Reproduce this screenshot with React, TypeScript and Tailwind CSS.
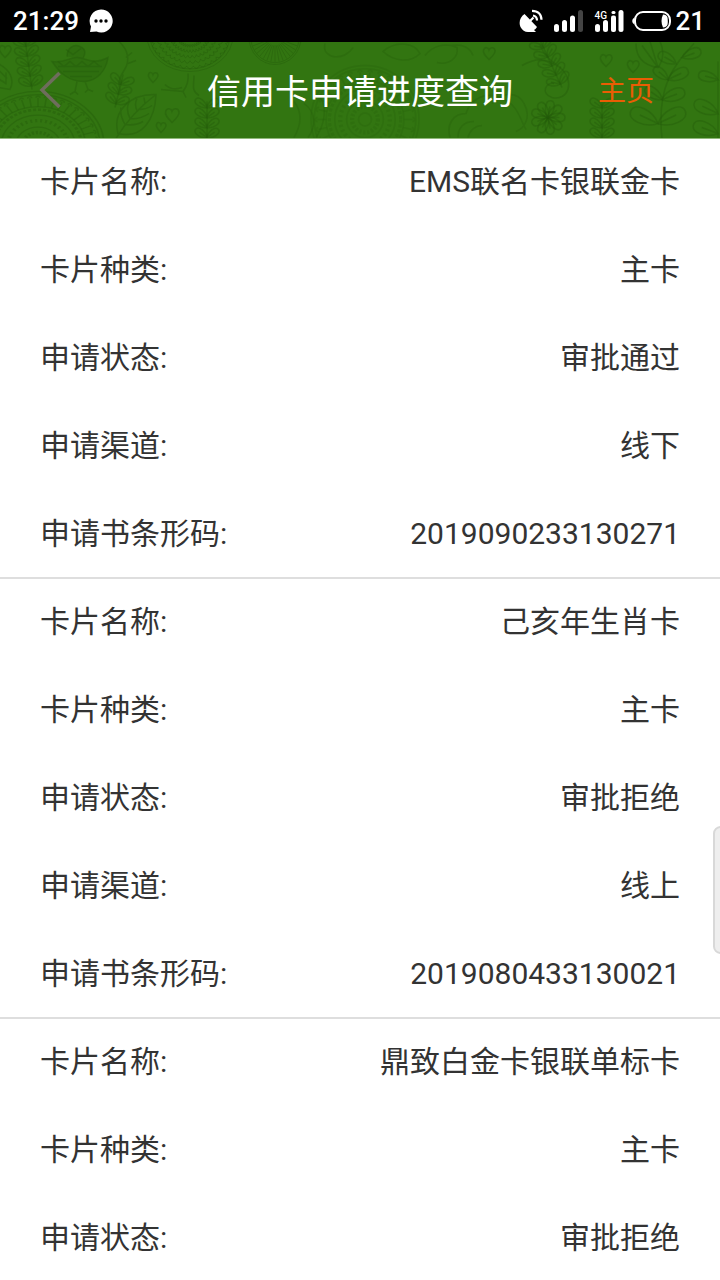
type CardApplication = {
  name: string;
  kind: string;
  status: string;
  channel: string;
  barcode: string;
};

const applications: CardApplication[] = [
  {
    name: "EMS联名卡银联金卡",
    kind: "主卡",
    status: "审批通过",
    channel: "线下",
    barcode: "2019090233130271",
  },
  {
    name: "己亥年生肖卡",
    kind: "主卡",
    status: "审批拒绝",
    channel: "线上",
    barcode: "2019080433130021",
  },
];

export default function App() {
  return (
    <div className="relative h-screen overflow-hidden bg-white font-[Roboto,'Noto_Sans_CJK_SC',sans-serif] text-[#333333]">
      <StatusBar />
      <Header />
      <main>
        {applications.map((item) => (
          <dl key={item.barcode} className="border-b-2 border-[#dedede]">
            <InfoRow label="卡片名称:" value={item.name} />
            <InfoRow label="卡片种类:" value={item.kind} />
            <InfoRow label="申请状态:" value={item.status} />
            <InfoRow label="申请渠道:" value={item.channel} />
            <InfoRow label="申请书条形码:" value={item.barcode} />
          </dl>
        ))}
        <dl>
          <InfoRow label="卡片名称:" value="鼎致白金卡银联单标卡" />
          <InfoRow label="卡片种类:" value="主卡" />
          <InfoRow label="申请状态:" value="审批拒绝" />
        </dl>
      </main>
      {/* edge handle */}
      <div className="absolute top-[826px] -right-2 h-32 w-[15px] rounded-lg border-2 border-[#d8d8d8] bg-[#eeeeee]" />
    </div>
  );
}

function InfoRow({ label, value }: { label: string; value: string }) {
  return (
    <div className="flex justify-between px-10 pt-[25px] pb-[27px] text-[30px] leading-9 last:pb-[25px]">
      <dt>{label}</dt>
      <dd>{value}</dd>
    </div>
  );
}

function StatusBar() {
  return (
    <div className="flex h-[42px] items-center justify-between bg-black pr-[15px] pl-[13px] text-[26px] leading-8 font-medium text-white">
      <div className="flex items-center gap-[10px]">
        <span>21:29</span>
        <svg width="24" height="24" viewBox="0 0 24 24" aria-hidden="true">
          <path
            d="M12 .5a11.5 11.5 0 1 1-4.5 22L1 23l1-5.500A11.500 11.500 0 0 1 12 .5z"
            fill="#fff"
          />
          <circle cx="7" cy="12" r="1.700" />
          <circle cx="12" cy="12" r="1.700" />
          <circle cx="17" cy="12" r="1.700" />
        </svg>
      </div>
      <div className="flex items-center gap-1">
        <svg
          width="152"
          height="24"
          viewBox="520 8 152 24"
          fill="#fff"
          aria-hidden="true"
        >
          {/* satellite dish */}
          <path d="M525.500 13 538 26c-1 1.500-2 2.500-3 3l2 2h-8c-3 0-6-2-7.500-5-2-4.500-.5-10 4-13z" />
          <path
            d="m531 20 3.500-3.500M534 14.500c2.500.5 4 2 4 5M533 9.800c6 0 9.500 3.500 9.500 9"
            fill="none"
            stroke="#fff"
            strokeWidth="2.200"
          />
          {/* first sim */}
          <rect x="555" y="23" width="5" height="8" rx="2.500" />
          <rect x="563" y="19" width="5" height="12" rx="2.500" />
          <rect x="571" y="14.500" width="5" height="16.500" rx="2.500" />
          <rect x="579" y="9" width="5" height="22" rx="2.500" fill="#444" />
          {/* second sim */}
          <text x="595.500" y="17.500" fontSize="10" fontWeight="500">
            4G
          </text>
          <rect x="596" y="23" width="5" height="8" rx="2.500" />
          <rect x="604" y="19" width="5" height="12" rx="2.500" />
          <rect x="612" y="14.500" width="5" height="16.500" rx="2" />
          <rect x="612.500" y="10" width="4" height="3" rx="1.500" />
          <rect x="619.500" y="9" width="5" height="22" rx="2.500" />
          {/* battery */}
          <rect
            x="636"
            y="11"
            width="35"
            height="18"
            rx="8"
            fill="none"
            stroke="#fff"
            strokeWidth="2"
          />
          <path d="M635.500 16.500c-3 1.500-3 5.500 0 7z" />
          <path d="M664 13.500c5 0 4.800 4 4.800 6.500s.2 6.500-4.800 6.500c-2-4-2-9 0-13z" />
        </svg>
        <span>21</span>
      </div>
    </div>
  );
}

function Header() {
  return (
    <header className="relative flex h-[97px] items-center border-b border-[#8fb879] bg-[#327511] px-9">
      <HeaderPattern />
      <button
        type="button"
        aria-label="返回"
        className="relative flex w-[120px] items-center"
      >
        <svg
          width="28"
          height="40"
          viewBox="0 0 28 40"
          fill="none"
          stroke="#6e6d5c"
          strokeWidth="3.500"
        >
          <path d="M23.500 3 6 20l17.500 17" />
        </svg>
      </button>
      <h1 className="relative flex-1 pt-1 text-center text-[34px] leading-10 text-white">
        信用卡申请进度查询
      </h1>
      <a
        href="#home"
        className="relative w-[120px] pt-1 pr-[30px] text-right text-[28px] leading-10 text-[#e95d04]"
      >
        主页
      </a>
    </header>
  );
}

// Doodles behind the title: birds, leaves, hearts and mandalas
function HeaderPattern() {
  return (
    <svg
      className="absolute inset-0 h-full w-full"
      viewBox="0 0 720 97"
      preserveAspectRatio="xMidYMid slice"
      fill="none"
      stroke="#245a0a"
      strokeOpacity="0.400"
      strokeWidth="1.500"
      aria-hidden="true"
    >
      <Mandala x={38} y={104} r={66} squash={0.82} petals={44} />
      <Mandala x={365} y={78} r={54} squash={1} petals={30} faint />
      <Scales x={190} y={-6} rx={43} ry={36} />
      <Scales x={275} y={-4} rx={26} ry={27} rays />

      {/* bird on the left */}
      <path
        d="M52 20c12 2 16-4 25-4s16 8 31 0c-2 14-12 24-24 24-15 0-24-8-32-20zM67 15c0-8 6-13 13-10s5 8 3 12M77 40l-2 10m0 0-5 3m5-3 3 3M85 40l3 8m0 0-3 3m3-3 5 2"
        fill="#245a0a"
        fillOpacity="0.250"
      />
      <path d="M58 25h44M63 30h36M70 35h22M58 20l6 5 6-5 6 5 6-5 6 5 6-5 6 5M66 8l7 5 8-6" />

      {/* bird legs under the bowl */}
      <path d="M188 32c1 8-2 14-5 18l-22-2m22 2 3 6m8-22c0 10-3 15 5 20m-17-8c-8 3-14 0-17-3" />

      <Sprig x={32} y={48} height={50} tilt={-8} />
      <Sprig x={115} y={66} height={34} tilt={14} />
      <path d="M119 0c10 9 11 20 5 29-5 8-6 12-4 20M126 16l6-5m-4 11 8-3" />
      <Sprig x={207} y={100} height={40} tilt={0} />
      <Sprig x={602} y={100} height={40} tilt={0} />
      <Sprig x={562} y={46} height={52} tilt={-25} />

      {/* big veined leaf */}
      <path d="M118 92c-6-22 12-40 38-39-1 24-13 45-38 39zM116 97c9-15 20-29 40-44M125 83c-4-7-5-12-4-17m9 11c-3-6-3-12-1-16m8 8c-2-4-2-8 0-12m8 5-1-6M125 83c7 1 13 0 18-3m-13-3c7 1 13-1 19-5m-11-4c5 0 10-1 14-4" />
      <path d="M-2 22c12 6 17 16 12 26L-2 46zM-2 28l9 9m-9 0 8 5m0-11v12" />

      <Heart x={5} y={10} size={6} />
      <Heart x={153} y={36} size={5} />
      <Heart x={172} y={74} size={7} />
      <Heart x={161} y={86} size={5} />
      <Heart x={606} y={19} size={6} />
      <Heart x={633} y={25} size={6} />
      <Heart x={489} y={12} size={6} />

      {/* curls right of the middle */}
      <g opacity="0.700">
        <path d="M325 2c-4 16 20 18 28 4m30 4c14-12 32-8 37 2-10 10-26 8-37-2zm42 4c8-10 20-13 32-8 2 10-8 18-20 15M452 4c10-2 18 2 21 10M294 60c8 10 8 22 0 36m10-34c12 8 12 24 4 34m12-40c8 10 4 28-4 40" />
        <path d="M450 96c-4-14 4-24 16-24 4-14 20-24 38-14 14 6 16 20 22 30M458 96c0-10 6-16 16-16M468 96c2-8 8-12 14-12M492 62c10-12 26-12 32 0 7 12 2 24-8 28" />
      </g>

      <Burst x={548} y={76} />
      <path d="M522 24c14-8 24-8 38 2 16 14 8 34-8 30-12-4-6-16 2-14M540 4c4 10 12 16 20 22" />

      {/* tall branches at the right edge */}
      <path d="M694 2c-18 20-38 40-32 95" />
      <Leaf x={682} y={16} angle={-20} length={20} />
      <Leaf x={676} y={22} angle={-150} length={20} />
      <Leaf x={668} y={38} angle={-140} length={18} />
      <Leaf x={668} y={38} angle={-25} length={22} />
      <Leaf x={662} y={58} angle={-145} length={20} />
      <Leaf x={662} y={58} angle={-20} length={24} />
      <Leaf x={658} y={82} angle={-155} length={30} />
      <Leaf x={658} y={82} angle={-25} length={30} />
      <path d="M636 2c0 14 8 22 22 24 6-8 6-18 2-26M642 4l16 22M650 0l8 26" />
      <path d="M718 20v77" />
      <Leaf x={718} y={72} angle={-155} length={26} />
      <Leaf x={718} y={92} angle={-160} length={26} />
      <Leaf x={718} y={38} angle={-165} length={20} />
    </svg>
  );
}

function Heart({ x, y, size }: { x: number; y: number; size: number }) {
  return (
    <path
      d="M0 1C-.6.4-1.100-.1-.9-.6c.2-.6.8-.4.9 0 .2-.5.900-.5 1 .1C1.100 0 .5.5 0 1z"
      transform={`translate(${x} ${y}) scale(${size})`}
      vectorEffect="non-scaling-stroke"
    />
  );
}

function Leaf({
  x,
  y,
  angle,
  length,
}: {
  x: number;
  y: number;
  angle: number;
  length: number;
}) {
  const w = length / 3;
  return (
    <path
      d={`M0 0C${w} ${-w} ${length} ${-w} ${length} 0S${w} ${w} 0 0h${w * 2}`}
      transform={`translate(${x} ${y}) rotate(${angle})`}
    />
  );
}

function Sprig({
  x,
  y,
  height,
  tilt,
}: {
  x: number;
  y: number;
  height: number;
  tilt: number;
}) {
  const steps = Array.from({ length: Math.floor(height / 10) }, (_, i) => i);
  return (
    <g transform={`translate(${x} ${y}) rotate(${tilt})`}>
      <path d={`M0 0V${-height}`} />
      {steps.map((i) => (
        <g key={i}>
          <Leaf x={0} y={-4 - i * 10} angle={-35} length={14} />
          <Leaf x={0} y={-4 - i * 10} angle={-145} length={14} />
        </g>
      ))}
    </g>
  );
}

function Burst({ x, y }: { x: number; y: number }) {
  const angles = [0, 40, 80, 120, 160, 200, 240, 280, 320];
  return (
    <g>
      {angles.map((a) => (
        <Leaf key={a} x={x} y={y} angle={a} length={17} />
      ))}
    </g>
  );
}

function Mandala({
  x,
  y,
  r,
  squash,
  petals,
  faint = false,
}: {
  x: number;
  y: number;
  r: number;
  squash: number;
  petals: number;
  faint?: boolean;
}) {
  const spokes = Array.from({ length: petals }, (_, i) => (i * 360) / petals);
  return (
    <g
      transform={`translate(${x} ${y}) scale(1 ${squash})`}
      opacity={faint ? 0.5 : 1}
    >
      <circle r={r} />
      <circle r={r * 0.94} />
      <circle r={r * 0.72} />
      <circle r={r * 0.66} strokeDasharray="3 2" strokeWidth="3" />
      <circle r={r * 0.56} />
      <circle r={r * 0.46} strokeDasharray="2 3" strokeWidth="4" />
      <circle r={r * 0.34} />
      <circle r={r * 0.24} strokeDasharray="2 2" strokeWidth="4" />
      <circle r={r * 0.12} />
      {spokes.map((a) => (
        <path
          key={a}
          d={`M${r * 0.72} 0H${r * 0.88}m0-2a2 2 0 0 1 0 4`}
          transform={`rotate(${a})`}
        />
      ))}
    </g>
  );
}

function Scales({
  x,
  y,
  rx,
  ry,
  rays = false,
}: {
  x: number;
  y: number;
  rx: number;
  ry: number;
  rays?: boolean;
}) {
  const rings = [0.25, 0.4, 0.55, 0.7, 0.85];
  const angles = [10, 20, 30, 40, 50, 60, 70, 80, 90, 100, 110, 120, 130, 140, 150, 160, 170];
  return (
    <g
      transform={`translate(${x} ${y}) scale(${rx} ${ry})`}
      strokeWidth="1"
    >
      <circle r="1" vectorEffect="non-scaling-stroke" />
      {rays
        ? angles.map((a) => (
            <path
              key={a}
              d="M.3 0H.9"
              transform={`rotate(${a})`}
              vectorEffect="non-scaling-stroke"
            />
          ))
        : rings.map((ring, i) =>
            angles.map((a) => (
              <path
                key={`${ring}-${a}`}
                d={`M${ring} ${-ring * 0.09}q.15 ${ring * 0.09} 0 ${ring * 0.18}`}
                transform={`rotate(${a + (i % 2) * 5})`}
                vectorEffect="non-scaling-stroke"
              />
            ))
          )}
      <circle r="0.930" vectorEffect="non-scaling-stroke" />
    </g>
  );
}
